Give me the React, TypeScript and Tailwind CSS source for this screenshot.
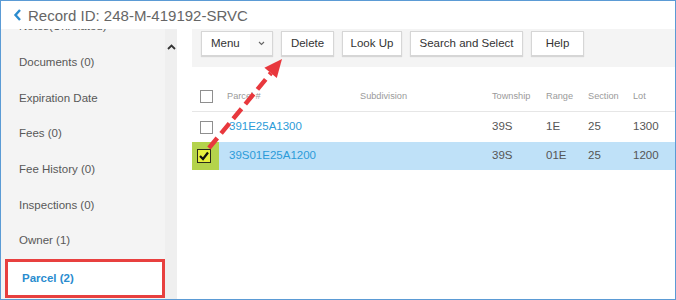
import React from "react";

const sideItems = [
  "Notes(Unrelated)",
  "Documents (0)",
  "Expiration Date",
  "Fees (0)",
  "Fee History (0)",
  "Inspections (0)",
  "Owner (1)",
];

function Box({ checked }: { checked?: boolean }) {
  if (checked) {
    return (
      <div className="w-[14px] h-[14px] border border-[#2a2a1a] bg-[#e6ef3e] flex items-center justify-center">
        <svg width="12" height="12" viewBox="0 0 12 12">
          <polyline points="2,6 5,9 10,2.5" fill="none" stroke="#111" strokeWidth="2.2" />
        </svg>
      </div>
    );
  }
  return <div className="w-[13px] h-[13px] border border-[#8f8f8f] bg-white" />;
}

export default function App() {
  const cols = "grid grid-cols-[35px_133px_132px_54px_42px_45px_1fr] items-center";
  return (
    <div className="relative w-[676px] h-[300px] border border-[#5b9bd5] bg-white overflow-hidden font-['Liberation_Sans',Arial,sans-serif]">
      {/* Header */}
      <div className="h-[28px] flex items-center bg-white">
        <svg className="ml-[12px]" width="10" height="14" viewBox="0 0 10 14">
          <polyline points="7,2 2.5,7 7,12" fill="none" stroke="#2a8ccf" strokeWidth="2.4" />
        </svg>
        <span className="ml-[5px] text-[15px] text-[#666] leading-none">Record ID: 248-M-419192-SRVC</span>
      </div>

      <div className="flex h-[270px]">
        {/* Sidebar */}
        <div className="w-[164px] bg-[#f4f4f4] overflow-hidden">
          <div className="mt-[-20px]">
            {sideItems.map((s) => (
              <div key={s} className="h-[35.7px] flex items-center pl-[18px] text-[11.5px] text-[#585858]">
                {s}
              </div>
            ))}
            <div className="ml-[4px] w-[160px] h-[39px] border-[3px] border-[#e8403f] bg-white flex items-center pl-[14px] text-[11.5px] font-bold text-[#2a8ccf]">
              Parcel (2)
            </div>
          </div>
        </div>
        {/* Scroll strip */}
        <div className="w-[12px] bg-[#efefef] flex justify-center pt-[15px]">
          <svg width="9" height="6" viewBox="0 0 9 6">
            <polyline points="1,5 4.5,1.5 8,5" fill="none" stroke="#333" strokeWidth="1.8" />
          </svg>
        </div>
        {/* Main */}
        <div className="flex-1 pl-[15px]">
          <div className="h-[38px] bg-[#f4f4f4] pt-[2px] pl-[9px] flex gap-[8px] items-start">
            <div className="w-[72px] h-[25px] bg-white border border-[#d6d6d6] shadow-[0_1px_1px_rgba(0,0,0,0.12)] flex items-center text-[11.5px] text-[#333]">
              <span className="ml-[9px]">Menu</span>
              <div className="ml-auto w-[22px] h-full bg-[#f9f9f9] flex items-center justify-center">
                <svg width="7" height="5" viewBox="0 0 7 5">
                  <polyline points="1,1 3.5,3.5 6,1" fill="none" stroke="#666" strokeWidth="1.1" />
                </svg>
              </div>
            </div>
            {[
              ["Delete", "w-[53px]"],
              ["Look Up", "w-[60px]"],
              ["Search and Select", "w-[113px]"],
              ["Help", "w-[53px]"],
            ].map(([t, w]) => (
              <div
                key={t}
                className={`${w} h-[25px] bg-white border border-[#d6d6d6] shadow-[0_1px_1px_rgba(0,0,0,0.12)] flex items-center justify-center text-[11.5px] text-[#333]`}
              >
                {t}
              </div>
            ))}
          </div>

          {/* Table */}
          <div className={`${cols} mt-[15px] h-[30px] border-b border-[#e6e6e6] text-[9.2px] text-[#9a9a9a]`}>
            <div className="pl-[8px]"><Box /></div>
            <div>Parcel #</div>
            <div>Subdivision</div>
            <div>Township</div>
            <div>Range</div>
            <div>Section</div>
            <div>Lot</div>
          </div>
          <div className={`${cols} h-[30px] text-[11.5px] text-[#555]`}>
            <div className="pl-[8px]"><Box /></div>
            <div className="pl-[2px] text-[#2b9bd8]">391E25A1300</div>
            <div />
            <div>39S</div>
            <div>1E</div>
            <div>25</div>
            <div>1300</div>
          </div>
          <div className={`${cols} h-[28px] bg-[#bfe1f8] text-[11.5px] text-[#555]`}>
            <div className="h-full">
              <div className="w-[27px] h-full bg-[#b4d34c] flex items-center pl-[5px]">
                <Box checked />
              </div>
            </div>
            <div className="pl-[2px] text-[#2b9bd8]">39S01E25A1200</div>
            <div />
            <div>39S</div>
            <div>01E</div>
            <div>25</div>
            <div>1200</div>
          </div>
        </div>
      </div>

      {/* Annotation arrow */}
      <svg className="absolute left-[-1px] top-[-1px] pointer-events-none" width="676" height="300" viewBox="0 0 676 300">
        <line x1="209" y1="148" x2="271" y2="73" stroke="#e8383d" strokeWidth="4.5" strokeDasharray="13 6" />
        <polygon points="282,59 276.8,78 264.4,67.8" fill="#e8383d" />
      </svg>
    </div>
  );
}
